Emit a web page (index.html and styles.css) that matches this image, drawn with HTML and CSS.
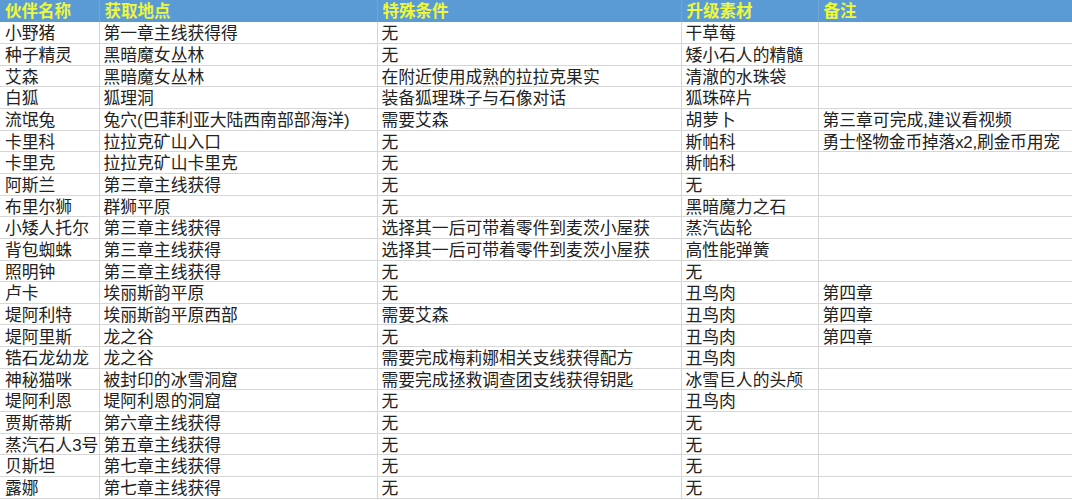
FILE: index.html
```html
<!DOCTYPE html>
<html lang="zh-CN">
<head>
<meta charset="utf-8">
<title>伙伴列表</title>
<link rel="stylesheet" href="styles.css">
</head>
<body>
<table class="sheet">
  <colgroup>
    <col class="c1"><col class="c2"><col class="c3"><col class="c4"><col class="c5">
  </colgroup>
  <thead>
    <tr><th>伙伴名称</th><th>获取地点</th><th>特殊条件</th><th>升级素材</th><th>备注</th></tr>
  </thead>
  <tbody>
    <tr><td>小野猪</td><td>第一章主线获得得</td><td>无</td><td>干草莓</td><td></td></tr>
    <tr><td>种子精灵</td><td>黑暗魔女丛林</td><td>无</td><td>矮小石人的精髓</td><td></td></tr>
    <tr><td>艾森</td><td>黑暗魔女丛林</td><td>在附近使用成熟的拉拉克果实</td><td>清澈的水珠袋</td><td></td></tr>
    <tr><td>白狐</td><td>狐理洞</td><td>装备狐理珠子与石像对话</td><td>狐珠碎片</td><td></td></tr>
    <tr><td>流氓兔</td><td>兔穴(巴菲利亚大陆西南部部海洋)</td><td>需要艾森</td><td>胡萝卜</td><td>第三章可完成,建议看视频</td></tr>
    <tr><td>卡里科</td><td>拉拉克矿山入口</td><td>无</td><td>斯帕科</td><td class="tight">勇士怪物金币掉落x2,刷金币用宠</td></tr>
    <tr><td>卡里克</td><td>拉拉克矿山卡里克</td><td>无</td><td>斯帕科</td><td></td></tr>
    <tr><td>阿斯兰</td><td>第三章主线获得</td><td>无</td><td>无</td><td></td></tr>
    <tr><td>布里尔狮</td><td>群狮平原</td><td>无</td><td>黑暗魔力之石</td><td></td></tr>
    <tr><td>小矮人托尔</td><td>第三章主线获得</td><td>选择其一后可带着零件到麦茨小屋获</td><td>蒸汽齿轮</td><td></td></tr>
    <tr><td>背包蜘蛛</td><td>第三章主线获得</td><td>选择其一后可带着零件到麦茨小屋获</td><td>高性能弹簧</td><td></td></tr>
    <tr><td>照明钟</td><td>第三章主线获得</td><td>无</td><td>无</td><td></td></tr>
    <tr><td>卢卡</td><td>埃丽斯韵平原</td><td>无</td><td>丑鸟肉</td><td>第四章</td></tr>
    <tr><td>堤阿利特</td><td>埃丽斯韵平原西部</td><td>需要艾森</td><td>丑鸟肉</td><td>第四章</td></tr>
    <tr><td>堤阿里斯</td><td>龙之谷</td><td>无</td><td>丑鸟肉</td><td>第四章</td></tr>
    <tr><td>锆石龙幼龙</td><td>龙之谷</td><td>需要完成梅莉娜相关支线获得配方</td><td>丑鸟肉</td><td></td></tr>
    <tr><td>神秘猫咪</td><td>被封印的冰雪洞窟</td><td>需要完成拯救调查团支线获得钥匙</td><td>冰雪巨人的头颅</td><td></td></tr>
    <tr><td>堤阿利恩</td><td>堤阿利恩的洞窟</td><td>无</td><td>丑鸟肉</td><td></td></tr>
    <tr><td>贾斯蒂斯</td><td>第六章主线获得</td><td>无</td><td>无</td><td></td></tr>
    <tr><td>蒸汽石人3号</td><td>第五章主线获得</td><td>无</td><td>无</td><td></td></tr>
    <tr><td>贝斯坦</td><td>第七章主线获得</td><td>无</td><td>无</td><td></td></tr>
    <tr><td>露娜</td><td>第七章主线获得</td><td>无</td><td>无</td><td></td></tr>
  </tbody>
</table>
</body>
</html>
```
FILE: styles.css
```css
html, body {
  margin: 0;
  padding: 0;
  background: #ffffff;
}

.sheet {
  width: 1072px;
  table-layout: fixed;
  border-collapse: collapse;
  font-family: "Liberation Sans", "Noto Sans CJK SC", sans-serif;
  font-size: 16.8px;
  color: #222222;
}

.c1 { width: 99px; }
.c2 { width: 278px; }
.c3 { width: 304px; }
.c4 { width: 137px; }
.c5 { width: 254px; }

.sheet th {
  height: 22px;
  padding: 0 4px 0 5px;
  box-sizing: border-box;
  background: #5b9bd5;
  color: #eef73a;
  font-weight: bold;
  font-size: 16.5px;
  text-align: left;
  line-height: 22px;
  white-space: nowrap;
  overflow: hidden;
  border: 0;
  border-left: 1px solid #6ea6da;
}

.sheet th:first-child {
  border-left: 0;
}

.sheet td {
  height: 21.65px;
  padding: 3px 3px 0 4px;
  box-sizing: border-box;
  line-height: 17.5px;
  white-space: nowrap;
  overflow: hidden;
  border: 1px solid #d6d6d6;
  border-top: 0;
  vertical-align: middle;
}

.sheet td:first-child {
  border-left: 0;
  padding-left: 5px;
}

.sheet td:last-child {
  border-right: 0;
}

.sheet td.tight {
  overflow: visible;
  letter-spacing: -0.2px;
}
```
